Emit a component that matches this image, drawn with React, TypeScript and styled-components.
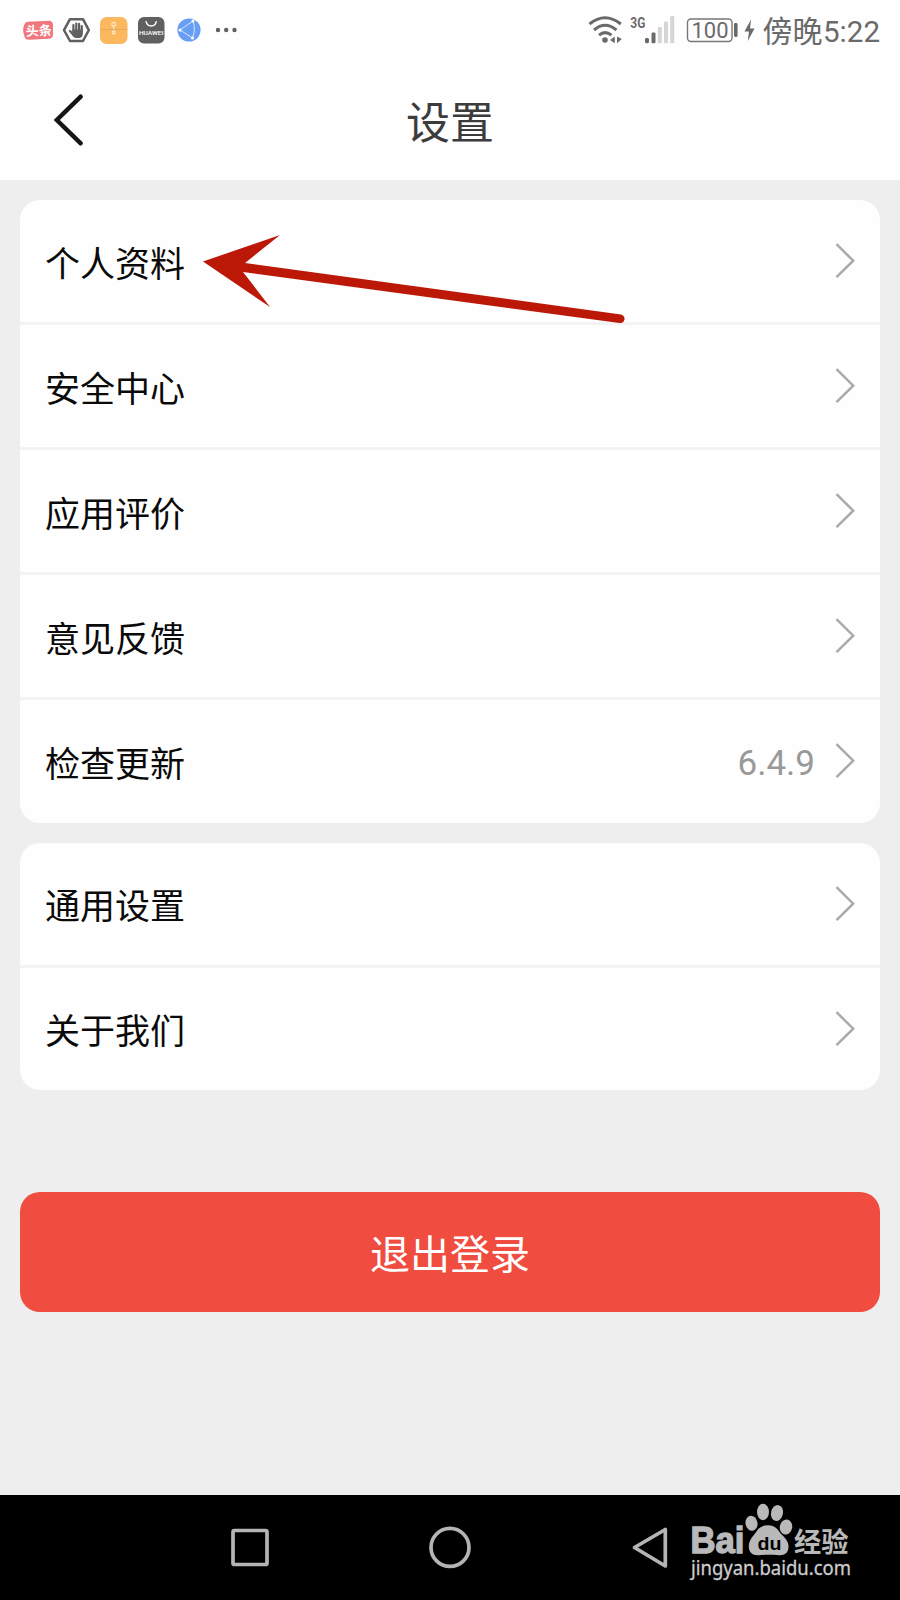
import React from 'react';
import styled, { createGlobalStyle } from 'styled-components';

const GlobalStyle = createGlobalStyle`
  * { box-sizing: border-box; }
  body { margin: 0; background: #eeeeee; font-family: Roboto, "Noto Sans CJK SC", sans-serif; }
  svg { display: block; overflow: visible; }
`;

const Screen = styled.div`
  position: relative;
  width: 900px;
  height: 1600px;
  display: flex;
  flex-direction: column;
  background: #eeeeee;
  overflow: hidden;
`;

const StatusBar = styled.div`
  height: 60px;
  padding: 0 20px 0 22px;
  display: flex;
  align-items: center;
  justify-content: space-between;
  background: #fefefe;
  color: #666;
`;

const Header = styled.header`
  height: 120px;
  display: grid;
  grid-template-columns: 140px 1fr 140px;
  align-items: center;
  background: #fefefe;
`;

const BackButton = styled.button`
  width: 140px;
  height: 120px;
  padding: 0;
  border: 0;
  background: none;
`;

const Title = styled.h1`
  margin: 8px 0 0;
  text-align: center;
  font-size: 44px;
  line-height: 60px;
  font-weight: 400;
  color: #3c3c3c;
`;

const Content = styled.main`
  flex: 1;
  display: flex;
  flex-direction: column;
  gap: 20px;
  padding: 20px 20px 0;
`;

const Card = styled.section`
  border-radius: 20px;
  background: #fefefe;
  overflow: hidden;
`;

const Row = styled.div`
  height: 125px;
  padding: 0 25px;
  display: flex;
  align-items: center;
  border-bottom: 3px solid #f3f3f3;
  &:last-child { border-bottom: 0; height: 122.5px; }
`;

const Label = styled.span`
  flex: 1;
  padding-top: 9px;
  font-size: 35px;
  line-height: 50px;
  color: #0a0a0a;
`;

const Value = styled.span`
  margin-right: 20px;
  padding-top: 6px;
  font-family: Roboto, sans-serif;
  font-size: 35px;
  line-height: 50px;
  color: #999;
`;

const LogoutButton = styled.button`
  height: 120px;
  margin-top: 82px;
  padding: 0;
  border: 0;
  border-radius: 20px;
  background: #f04c40;
  color: #fff;
  font: 400 40px/60px "Noto Sans CJK SC", sans-serif;
`;

const NavBar = styled.nav`
  height: 105px;
  display: flex;
  background: #000;
`;

const Pointer = styled.svg`
  position: absolute;
  left: 0;
  top: 0;
  pointer-events: none;
`;

const Chevron = () => (
  <svg width="20" height="36" viewBox="0 0 20 36" fill="none" stroke="#aaa" strokeWidth="2.5">
    <path d="M1.5 1.2 L18.2 17.7 L1.5 34.2" />
  </svg>
);

const NoticeIcons = () => (
  <svg width="230" height="60" viewBox="22 0 230 60">
    <path d="M28 21.8L49 20.8Q53 21 53 25V34.5Q53 38.5 49 38.8L29 39.8Q24.5 39.5 24.4 36Q22 30 24.2 25Q25 22 28 21.8Z" fill="#f0777e" />
    <text x="38.8" y="35.6" textAnchor="middle" fontSize="13" fontWeight="700" fill="#fff" transform="rotate(-2 38.8 30)">头条</text>
    <path d="M70 19.2H83L88.8 30.1L83 41H70L64 30.1Z" fill="none" stroke="#606060" strokeWidth="2.5" strokeLinejoin="round" />
    <path d="M73.4 31V25.2M76.3 30V23.6M79.1 30V23.9M81.8 31V26" stroke="#606060" strokeWidth="2.2" strokeLinecap="round" fill="none" />
    <path d="M72.3 29.5H82.9V33Q82.8 37.8 79.5 38H75.8Q73.3 37.8 71.5 34.6L68.9 31.2Q68.6 29.6 70.3 30L72.3 31.5Z" fill="#606060" />
    <rect x="100" y="17" width="27.5" height="27" rx="6.5" fill="#fbb85f" />
    <path d="M101 29.5H127" stroke="#dda75e" strokeWidth=".8" />
    <g fill="none" stroke="#ffe7bd" strokeWidth="1.3">
      <circle cx="113.7" cy="24.3" r="1.9" />
      <circle cx="113.7" cy="32.4" r="1.4" />
      <path d="M113.7 26.5V29" />
    </g>
    <rect x="138" y="17" width="26.5" height="26.5" rx="6" fill="#606060" />
    <path d="M146 21.2Q146.8 26 151.2 26Q155.6 26 156.4 21.2" stroke="#fff" strokeWidth="1.4" fill="none" />
    <text x="151.2" y="34.7" textAnchor="middle" fontSize="6" fontWeight="500" fill="#fff" textLength="24.5" lengthAdjust="spacingAndGlyphs">HUAWEI</text>
    <circle cx="189" cy="30" r="11.6" fill="#699ff2" />
    <path d="M180 30L193 21Q196 29 192.5 38Z" fill="none" stroke="#d5e5ff" strokeWidth="1" />
    <g fill="#fff"><circle cx="180" cy="30" r="1.5" /><circle cx="193" cy="21" r="1.5" /><circle cx="192.5" cy="38" r="1.5" /></g>
    <g fill="#606060"><circle cx="218" cy="30" r="2.2" /><circle cx="226.2" cy="30" r="2.2" /><circle cx="234.5" cy="30" r="2.2" /></g>
  </svg>
);

const SystemIcons = () => (
  <svg width="300" height="60" viewBox="580 0 300 60" fill="#6a6a6a">
    <g fill="none" stroke="#6a6a6a" strokeWidth="3">
      <path d="M589.5 24Q605 11.5 620.8 24" />
      <path d="M594 30Q605 20.5 616.5 30" />
      <path d="M599 35.2Q605 30 611.5 35.2" />
    </g>
    <circle cx="605" cy="40" r="2.8" />
    <path d="M610 40L614.8 36.5V43.2Z M617 36.5L621.8 39L617 43.2Z" />
    <text x="630.3" y="28" fontSize="15.5" fontWeight="700" textLength="15" lengthAdjust="spacingAndGlyphs">3G</text>
    <g>
      <rect x="645" y="38" width="4" height="5.2" rx="1.4" />
      <rect x="651.5" y="32.5" width="4" height="10.7" rx="1.2" />
    </g>
    <g fill="#d5d5d5">
      <rect x="657.8" y="27" width="4" height="16.2" rx="1" />
      <rect x="664" y="21.5" width="4" height="21.7" rx="1" />
      <rect x="670.2" y="16" width="4" height="27.2" rx="1" />
    </g>
    <rect x="687.5" y="19" width="44.5" height="22.5" rx="3.5" fill="none" stroke="#777" strokeWidth="1.4" />
    <text x="691.5" y="38" fontSize="22.5" textLength="37" lengthAdjust="spacingAndGlyphs">100</text>
    <rect x="734" y="23" width="3.6" height="14" rx="1.4" />
    <path d="M751 19.5L744.5 31.5H749L747.8 41L754.5 28.5H750Z" />
    <text x="762.5" y="42.2" fontSize="30">傍晚</text>
    <text x="823" y="41.8" fontSize="30" textLength="57" lengthAdjust="spacingAndGlyphs">5:22</text>
  </svg>
);

const NavIcons = () => (
  <svg width="900" height="105" viewBox="0 1495 900 105">
    <g fill="none" stroke="#b4b4b4" strokeWidth="3.7" strokeLinejoin="round">
      <rect x="233" y="1530.5" width="34" height="34" rx="1.5" />
      <circle cx="450" cy="1547.4" r="19" />
      <path d="M665.3 1529.5V1566L634.5 1547.5Z" />
    </g>
    <g fill="#b9b9b9">
      <text x="690.5" y="1553.3" fontFamily="Liberation Sans" fontWeight="700" fontSize="36" stroke="#b9b9b9" strokeWidth="1.4" textLength="54" lengthAdjust="spacingAndGlyphs">Bai</text>
      <ellipse cx="751.5" cy="1523.2" rx="6" ry="7.6" transform="rotate(-10 751.5 1523.2)" />
      <ellipse cx="763" cy="1512" rx="6" ry="8.2" />
      <ellipse cx="777" cy="1513" rx="6" ry="8" transform="rotate(12 777 1513)" />
      <ellipse cx="786" cy="1527" rx="6.2" ry="7.6" transform="rotate(10 786 1527)" />
      <path d="M757.5 1530C762 1523.5 774 1523.5 778 1530C781 1535 788.5 1539 788.5 1546.5C788.5 1553 784.5 1555.5 779 1555.2C772 1554.6 765 1554.6 758.5 1555.2C752.5 1555.5 748.8 1552.5 748.8 1546.5C748.8 1539 754.5 1535 757.5 1530Z" />
      <text x="757.5" y="1550" fontFamily="Liberation Sans" fontWeight="700" fontSize="19" fill="#000" textLength="24" lengthAdjust="spacingAndGlyphs">du</text>
      <text x="794" y="1551.5" fontFamily="Noto Sans CJK SC" fontWeight="700" fontSize="27.5" textLength="54.5" lengthAdjust="spacingAndGlyphs">经验</text>
      <text x="691" y="1575.3" fontFamily="Noto Sans" fontSize="19" fill="#ccc" stroke="#ccc" strokeWidth=".3" textLength="160" lengthAdjust="spacingAndGlyphs">jingyan.baidu.com</text>
    </g>
  </svg>
);

const groups: { label: string; value?: string }[][] = [
  [{ label: '个人资料' }, { label: '安全中心' }, { label: '应用评价' }, { label: '意见反馈' }, { label: '检查更新', value: '6.4.9' }],
  [{ label: '通用设置' }, { label: '关于我们' }],
];

export default function App() {
  return (
    <Screen>
      <GlobalStyle />
      <StatusBar>
        <NoticeIcons />
        <SystemIcons />
      </StatusBar>
      <Header>
        <BackButton aria-label="返回">
          <svg width="140" height="120" viewBox="0 60 140 120">
            <path d="M80.7 96.7L56.8 120L80.7 143.3" fill="none" stroke="#151515" strokeWidth="4.4" strokeLinecap="round" />
          </svg>
        </BackButton>
        <Title>设置</Title>
      </Header>
      <Content>
        {groups.map((rows, i) => (
          <Card key={i}>
            {rows.map((row) => (
              <Row key={row.label}>
                <Label>{row.label}</Label>
                {row.value && <Value>{row.value}</Value>}
                <Chevron />
              </Row>
            ))}
          </Card>
        ))}
        <LogoutButton>退出登录</LogoutButton>
      </Content>
      <NavBar>
        <NavIcons />
      </NavBar>
      <Pointer width="900" height="400" viewBox="0 0 900 400">
        <path d="M203 261.5L280 235L245 263L621 314.5Q625 316 624.5 319.5Q623.5 323.5 619.5 323L243 272L270 307Z" fill="#bc1807" />
      </Pointer>
    </Screen>
  );
}
